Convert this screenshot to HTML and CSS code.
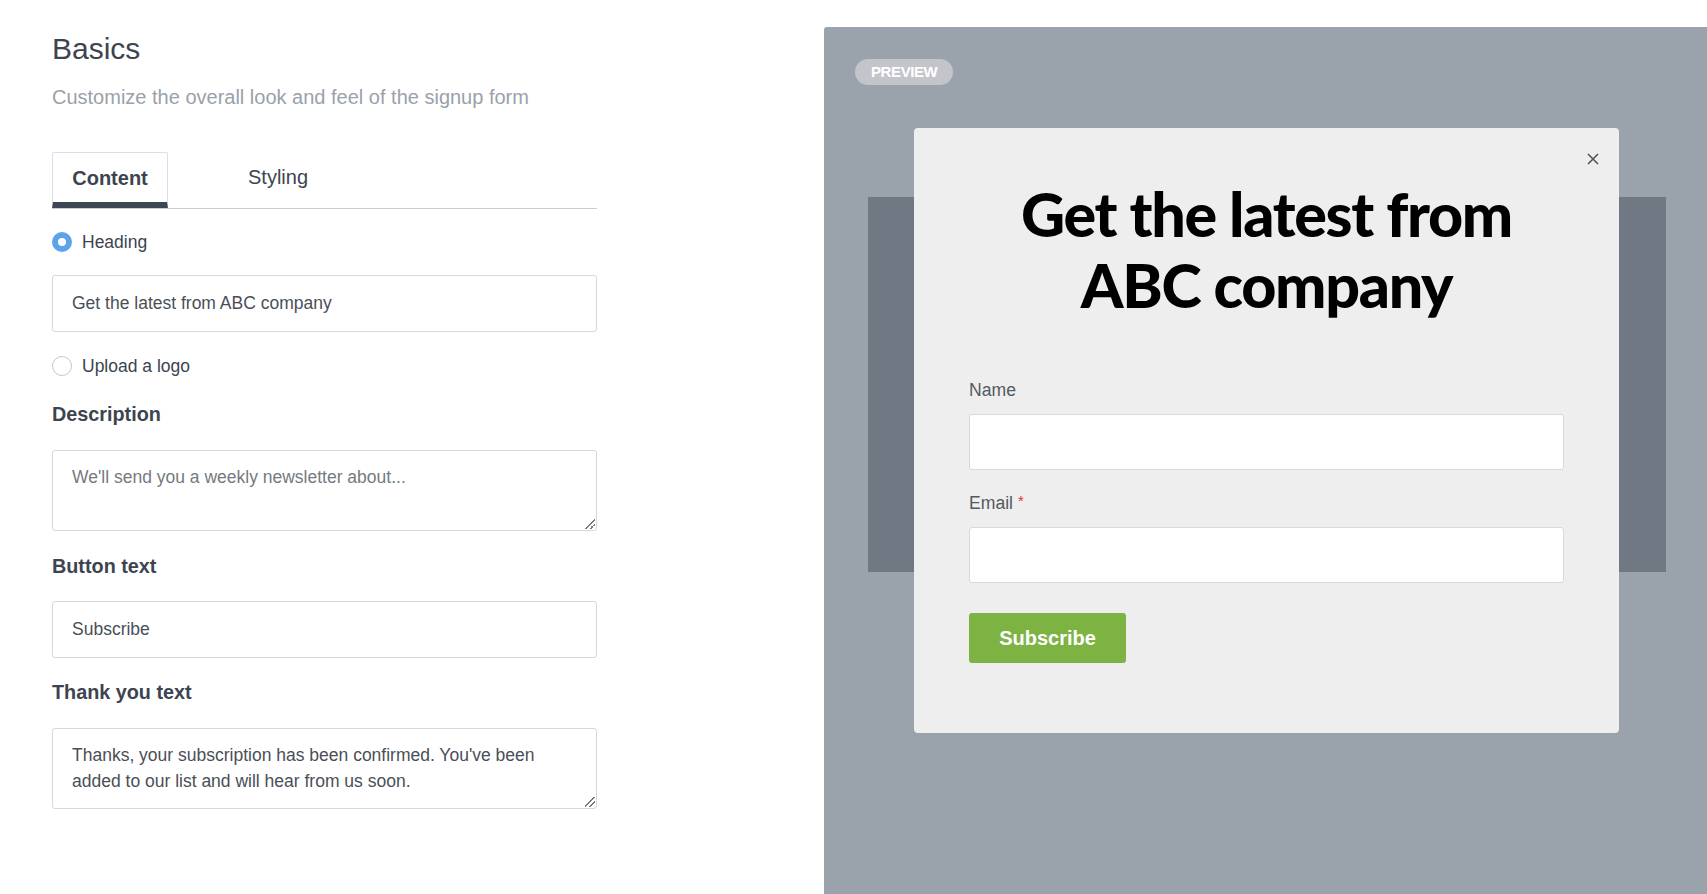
FILE: index.html
```html
<!DOCTYPE html>
<html lang="en">
<head>
<meta charset="utf-8">
<title>Signup form – Basics</title>
<link rel="stylesheet" href="styles.css">
</head>
<body>
<div class="page">
  <section class="editor">
    <h1 class="title">Basics</h1>
    <p class="subtitle">Customize the overall look and feel of the signup form</p>

    <div class="tabs">
      <div class="tab tab-active">Content</div>
      <div class="tab">Styling</div>
    </div>

    <label class="radio-row row-heading">
      <span class="radio radio-on"></span>
      <span>Heading</span>
    </label>
    <div class="field">Get the latest from ABC company</div>

    <label class="radio-row row-logo">
      <span class="radio"></span>
      <span>Upload a logo</span>
    </label>

    <div class="label">Description</div>
    <div class="area placeholder">We'll send you a weekly newsletter about...<span class="grip"></span></div>

    <div class="label">Button text</div>
    <div class="field">Subscribe</div>

    <div class="label">Thank you text</div>
    <div class="area">Thanks, your subscription has been confirmed. You've been added to our list and will hear from us soon.<span class="grip"></span></div>
  </section>

  <section class="preview">
    <div class="pill">PREVIEW</div>
    <div class="stage">
      <div class="band"></div>
      <div class="modal">
        <span class="close">
          <svg width="14" height="14" viewBox="0 0 14 14"><path d="M2 2 L12 12 M12 2 L2 12" stroke="#555" stroke-width="1.6" fill="none"/></svg>
        </span>
        <h2 class="modal-title">Get the latest from ABC company</h2>
        <div class="m-label">Name</div>
        <div class="m-input"></div>
        <div class="m-label m-label-email">Email <span class="req">*</span></div>
        <div class="m-input"></div>
        <div class="m-button">Subscribe</div>
      </div>
    </div>
  </section>
</div>
</body>
</html>
```

FILE: styles.css
```css
* { box-sizing: border-box; }
html, body { margin: 0; padding: 0; background: #ffffff; }
body {
  font-family: "Liberation Sans", Arial, sans-serif;
  color: #3d4450;
  width: 1707px;
  height: 894px;
  overflow: hidden;
}
.page {
  display: flex;
  height: 894px;
}
.editor {
  width: 824px;
  flex: none;
  padding: 31px 0 0 52px;
}
.editor > * { width: 545px; }
.title {
  margin: 0;
  font-size: 30px;
  line-height: 36px;
  font-weight: normal;
  color: #3d4450;
}
.subtitle {
  margin: 18px 0 0;
  font-size: 20px;
  line-height: 24px;
  color: #9aa1aa;
}
.tabs {
  margin-top: 43px;
  display: flex;
  border-bottom: 1px solid #c9cdd2;
  height: 57px;
}
.tab {
  font-size: 20px;
  line-height: 50px;
  color: #3d4450;
  padding: 0 20px;
  height: 56px;
}
.tab-active {
  width: 116px;
  padding: 0;
  text-align: center;
  font-weight: bold;
  border: 1px solid #d3e1ef;
  border-bottom: 6px solid #3e4654;
  border-radius: 2px 2px 0 0;
}
.tab + .tab { margin-left: 60px; }
.radio-row {
  display: flex;
  align-items: center;
  gap: 10px;
  font-size: 17.5px;
  height: 24px;
  color: #3d4450;
}
.row-heading { margin-top: 21px; }
.row-logo { margin-top: 22px; }
.radio {
  width: 20px;
  height: 20px;
  border-radius: 50%;
  border: 1px solid #c4c8cd;
  background: #fff;
  flex: none;
}
.radio-on {
  border: 6px solid #5ba4ec;
}
.field {
  margin-top: 21px;
  height: 57px;
  border: 1px solid #d6d8db;
  border-radius: 3px;
  padding: 0 19px;
  font-size: 17.5px;
  line-height: 55px;
  color: #4a4f57;
  background: #fff;
}
.label {
  font-weight: bold;
  font-size: 19.8px;
  line-height: 24px;
  margin-top: 23px;
  color: #3d4450;
}
.row-logo + .label { margin-top: 24px; }
.label + .area { margin-top: 24px; }
.label + .field { margin-top: 23px; }
.area {
  position: relative;
  height: 81px;
  border: 1px solid #d6d8db;
  border-radius: 3px;
  padding: 13px 19px;
  font-size: 17.5px;
  line-height: 26px;
  color: #4a4f57;
  background: #fff;
}
.area.placeholder { color: #767a80; padding-top: 13px; }
.grip {
  position: absolute;
  right: 1px;
  bottom: 1px;
  width: 10px;
  height: 10px;
  background:
    linear-gradient(135deg, transparent 45%, #7a7a7a 45%, #7a7a7a 55%, transparent 55%, transparent 70%, #7a7a7a 70%, #7a7a7a 80%, transparent 80%);
}
.field + .label { margin-top: 22px; }

/* preview */
.preview {
  flex: 1;
  margin-top: 27px;
  background: #9aa2ac;
  border-top-left-radius: 3px;
  padding: 32px 41px 0 31px;
  position: relative;
}
.pill {
  display: inline-block;
  height: 26px;
  padding: 0 16px;
  border-radius: 13px;
  background: #c4c5cb;
  color: #ffffff;
  font-weight: bold;
  font-size: 15px;
  letter-spacing: -0.4px;
  line-height: 26px;
}
.stage {
  position: relative;
  margin-top: 112px;
  margin-left: 13px;
}
.band {
  height: 375px;
  background: #6f7883;
}
.modal {
  position: absolute;
  left: 46px;
  top: -69px;
  width: 705px;
  height: 605px;
  background: #eeeeee;
  border-radius: 4px;
  padding: 50px 55px 0;
  display: flex;
  flex-direction: column;
  align-items: flex-start;
}
.close {
  position: absolute;
  right: 19px;
  top: 24px;
  width: 14px;
  height: 14px;
  display: block;
}
.close svg { display: block; }
.modal-title {
  margin: 0;
  align-self: stretch;
  text-align: center;
  font-family: "Lato", "Liberation Sans", sans-serif;
  font-weight: 900;
  font-size: 61px;
  line-height: 71px;
  letter-spacing: -1.3px;
  color: #000;
  padding: 0 40px;
}
.m-label {
  margin-top: 59px;
  font-size: 17.6px;
  line-height: 22px;
  color: #555a60;
}
.m-label-email { margin-top: 20px; }
.req { color: #e0333a; font-size: 15px; vertical-align: 3px; }
.m-input {
  margin-top: 13px;
  align-self: stretch;
  height: 56px;
  background: #ffffff;
  border: 1px solid #d9d9d9;
  border-radius: 3px;
}
.m-button {
  margin-top: 30px;
  width: 157px;
  height: 50px;
  background: #7cb342;
  border-radius: 3px;
  color: #ffffff;
  font-weight: bold;
  font-size: 20px;
  line-height: 50px;
  text-align: center;
}
```
